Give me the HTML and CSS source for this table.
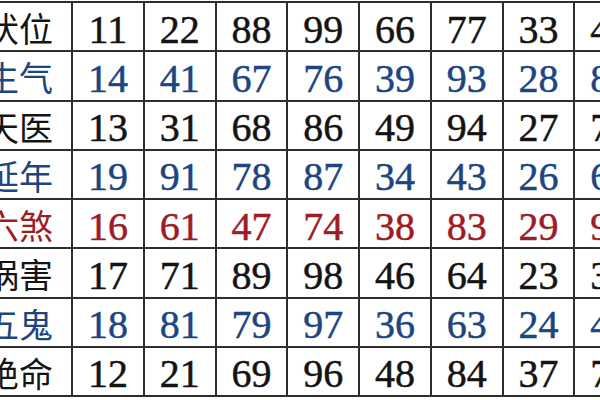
FILE: index.html
```html
<!DOCTYPE html>
<html lang="zh">
<head>
<meta charset="utf-8">
<title>八星数字表</title>
<link rel="stylesheet" href="styles.css">
</head>
<body>
<div class="page">
  <div class="table">
    <div class="row black"><div class="label">伏位</div><div class="num">11</div><div class="num">22</div><div class="num">88</div><div class="num">99</div><div class="num">66</div><div class="num">77</div><div class="num">33</div><div class="num">44</div></div>
    <div class="row blue"><div class="label">生气</div><div class="num">14</div><div class="num">41</div><div class="num">67</div><div class="num">76</div><div class="num">39</div><div class="num">93</div><div class="num">28</div><div class="num">82</div></div>
    <div class="row black"><div class="label">天医</div><div class="num">13</div><div class="num">31</div><div class="num">68</div><div class="num">86</div><div class="num">49</div><div class="num">94</div><div class="num">27</div><div class="num">72</div></div>
    <div class="row blue"><div class="label">延年</div><div class="num">19</div><div class="num">91</div><div class="num">78</div><div class="num">87</div><div class="num">34</div><div class="num">43</div><div class="num">26</div><div class="num">62</div></div>
    <div class="row red"><div class="label">六煞</div><div class="num">16</div><div class="num">61</div><div class="num">47</div><div class="num">74</div><div class="num">38</div><div class="num">83</div><div class="num">29</div><div class="num">92</div></div>
    <div class="row black"><div class="label">祸害</div><div class="num">17</div><div class="num">71</div><div class="num">89</div><div class="num">98</div><div class="num">46</div><div class="num">64</div><div class="num">23</div><div class="num">32</div></div>
    <div class="row blue"><div class="label">五鬼</div><div class="num">18</div><div class="num">81</div><div class="num">79</div><div class="num">97</div><div class="num">36</div><div class="num">63</div><div class="num">24</div><div class="num">42</div></div>
    <div class="row black"><div class="label">绝命</div><div class="num">12</div><div class="num">21</div><div class="num">69</div><div class="num">96</div><div class="num">48</div><div class="num">84</div><div class="num">37</div><div class="num">73</div></div>
  </div>
</div>
</body>
</html>
```

FILE: styles.css
```css
html, body {
  margin: 0;
  padding: 0;
  background: #ffffff;
}

.page {
  width: 600px;
  height: 400px;
  overflow: hidden;
  background: #ffffff;
}

.table {
  margin-left: -33px;
  margin-top: 1px;
  width: 700px;
  display: grid;
  grid-template-columns: 104px repeat(8, 69.75px);
  grid-auto-rows: 47.25px;
  gap: 2px;
  padding: 2px 0;
  background: #2e2e2e;
}

.row {
  display: contents;
}

.label,
.num {
  background: #ffffff;
  display: flex;
  align-items: center;
  justify-content: center;
  white-space: nowrap;
}

.label {
  font-family: "Noto Sans CJK SC", "Noto Sans", sans-serif;
  font-size: 34px;
  padding-top: 2px;
}

.num {
  font-family: "Liberation Serif", "Times New Roman", serif;
  font-size: 40px;
  padding-top: 5px;
  -webkit-text-stroke: 0.5px currentColor;
}

.black .label,
.black .num {
  color: #141414;
}

.blue .label,
.blue .num {
  color: #1d4580;
}

.red .label,
.red .num {
  color: #9e1c25;
}
```
